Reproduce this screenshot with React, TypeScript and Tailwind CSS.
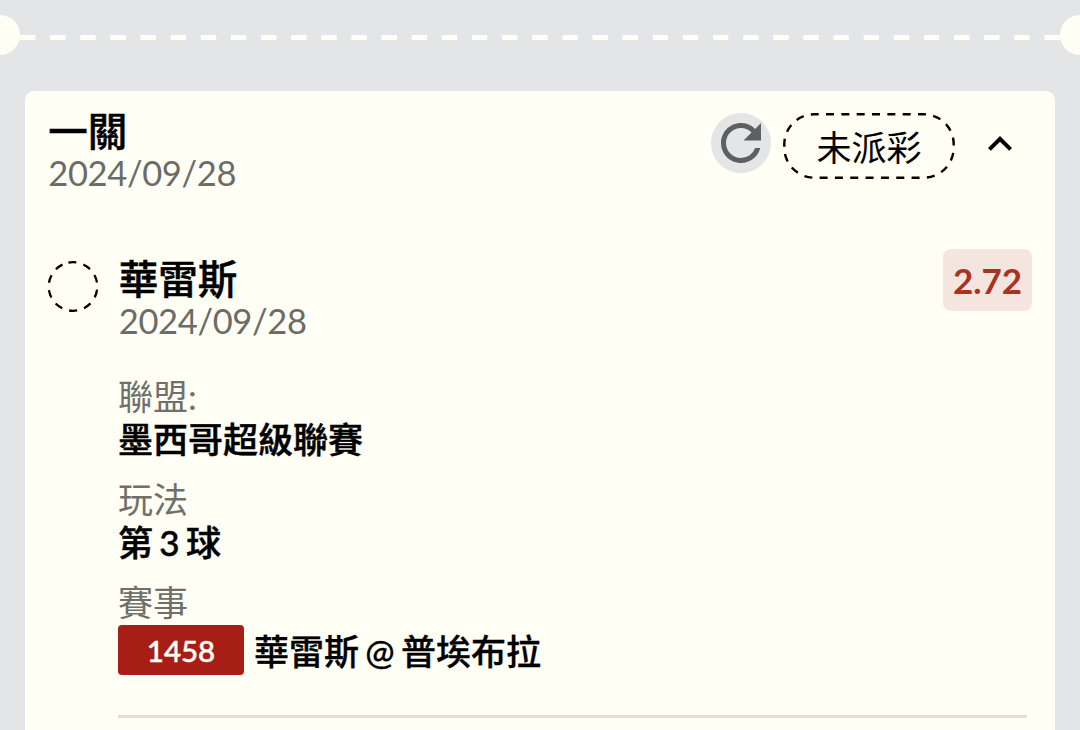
import type { ReactNode } from "react";
import { MdExpandLess, MdRefresh } from "react-icons/md";

interface DetailProps {
  label: string;
  children: ReactNode;
}

const bet = {
  title: "一關",
  date: "2024/09/28",
  status: "未派彩",
  pick: "華雷斯",
  odds: "2.72",
  league: "墨西哥超級聯賽",
  play: "第 3 球",
  matchNo: "1458",
  match: "華雷斯 @ 普埃布拉"
};

const App = () => {
  return (
    <div className="flex h-[730px] w-[1080px] flex-col overflow-hidden bg-[#e4e5e7] font-['Lato','Noto_Sans_CJK_TC',sans-serif] text-black">
      <TicketDivider />

      <main className="mx-[25px] mt-[35.5px] h-[700px] shrink-0 rounded-[9px] bg-[#fffff5] pt-[19.5px] pr-[23px] pl-[22.5px]">
        <header className="flex h-[137px] items-start justify-between">
          <Heading title={bet.title} date={bet.date} />

          <div className="flex items-center pt-[2.5px]">
            <button className="mr-3 mb-[5px] flex h-[60px] w-[60px] items-center justify-center rounded-full bg-[#e4e5e7] text-[#5e5f61]">
              <MdRefresh size={60} />
            </button>
            <StatusPill label={bet.status} />
            <button className="mr-2 mb-1 ml-[21px]">
              <MdExpandLess size={48} />
            </button>
          </div>
        </header>

        <section className="flex pt-[11px]">
          <DashedCircle />

          <div className="ml-[19.5px] flex-1">
            <div className="flex items-start justify-between">
              <Heading title={bet.pick} date={bet.date} />
              <span className="-mt-[9px] flex h-[62px] w-[89px] items-center justify-center rounded-lg bg-[#f4e6df] text-[35px] font-bold text-[#aa3223]">
                {bet.odds}
              </span>
            </div>

            <div className="mt-[33px] mr-[5px] border-b-[3px] border-[#e1e1da] pb-[39.5px]">
              <Detail label="聯盟:">{bet.league}</Detail>
              <Detail label="玩法">{bet.play}</Detail>
              <Detail label="賽事">
                <div className="flex items-center pt-px">
                  <span className="mr-2.5 flex h-[50px] w-[126px] items-center justify-center rounded bg-[#a61e15] text-[29.5px] text-[#fffff5] [-webkit-text-stroke:0.5px_#fffff5]">
                    {bet.matchNo}
                  </span>
                  <span className="pt-0.5 [-webkit-text-stroke:0.3px_black]">{bet.match}</span>
                </div>
              </Detail>
            </div>
          </div>
        </section>
      </main>
    </div>
  );
};

const TicketDivider = () => {
  return (
    <div className="mt-[15px] flex h-10 shrink-0 items-center">
      <span className="-ml-5 h-10 w-10 shrink-0 rounded-full bg-[#fffff5]" />
      <svg width="1040" height="5" className="mt-[5px] shrink-0">
        <line x1="0" y1="2.5" x2="1040" y2="2.5" stroke="#fffff5" strokeWidth="5" strokeDasharray="15.4 14.73" />
      </svg>
      <span className="h-10 w-10 shrink-0 rounded-full bg-[#fffff5]" />
    </div>
  );
};

const Heading = ({ title, date }: { title: string; date: string }) => {
  return (
    <div className="pl-[0.8px]">
      <h2 className="text-[39.5px] leading-[42px] font-medium [-webkit-text-stroke:0.5px_black]">{title}</h2>
      <p className="text-[34.5px] leading-[42px] tracking-[-0.35px] text-[#6b6b67]">{date}</p>
    </div>
  );
};

const StatusPill = ({ label }: { label: string }) => {
  return (
    <div className="relative flex h-[66px] w-[172px] items-center justify-center pt-[3px] text-[35px]">
      <svg className="absolute inset-0" width="172" height="66" fill="none">
        <rect
          x="1.3"
          y="1.3"
          width="169.4"
          height="63.4"
          rx="30"
          stroke="black"
          strokeWidth="2.4"
          strokeDasharray="8 7.33"
          strokeDashoffset="3.6"
        />
      </svg>
      {label}
    </div>
  );
};

const DashedCircle = () => {
  return (
    <svg width="51" height="51" fill="none" className="mt-[3px] shrink-0 overflow-visible">
      <circle
        cx="25"
        cy="25.5"
        r="24.3"
        stroke="black"
        strokeWidth="2.3"
        strokeDasharray="8 7.268"
        transform="rotate(-101 25 25.5)"
      />
    </svg>
  );
};

const Detail = ({ label, children }: DetailProps) => {
  return (
    <div className="mb-[17px] text-[35px] leading-[43px] last:mb-0">
      <p className="text-[#70706b]">{label}</p>
      <div className="font-medium [word-spacing:-2.5px] [-webkit-text-stroke:0.5px_black]">{children}</div>
    </div>
  );
};

export default App;
